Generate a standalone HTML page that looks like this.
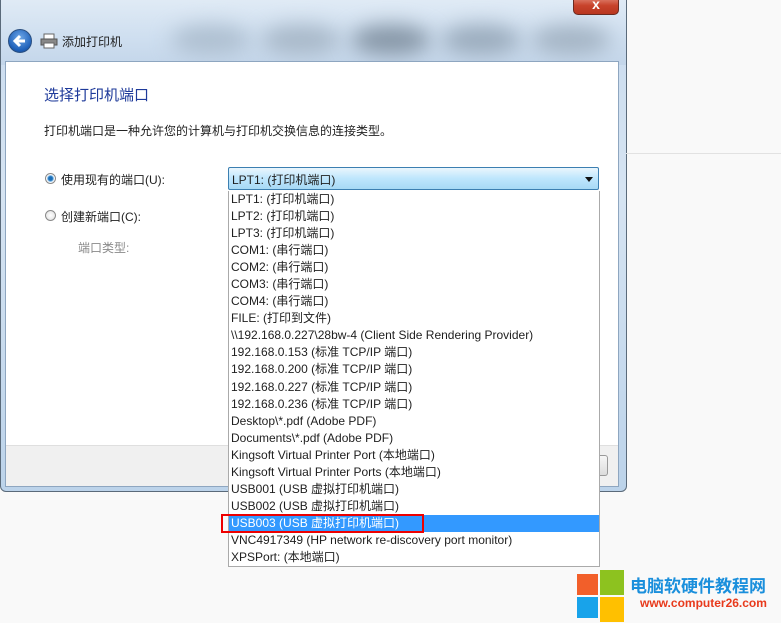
<!DOCTYPE html>
<html><head><meta charset="utf-8"><style>
*{margin:0;padding:0;box-sizing:border-box}
body{width:781px;height:623px;background:#f9f9f9;position:relative;overflow:hidden;font-family:"Liberation Sans","Noto Sans CJK SC",sans-serif;font-size:12px;color:#1e1e1e}
.win{position:absolute;left:0;top:-6px;width:627px;height:498px;border:1px solid #5a6a7a;border-radius:6px;background:linear-gradient(180deg,#c9dbee 0%,#d6e4f2 40%,#bcd3ea 100%);overflow:hidden}
.glass{position:absolute;left:0;top:0;width:627px;height:70px;background:linear-gradient(180deg,#e2ecf6,#cfdff0 60%,#c4d6ea)}
.blob{position:absolute;border-radius:50%;filter:blur(10px)}
.close{position:absolute;left:573px;top:-6px;width:46px;height:21px;border:1px solid #6b2a20;border-radius:0 0 5px 5px;background:linear-gradient(#e89a8a,#c8432c 55%,#b8361f);color:#fff;font-weight:bold;text-align:center;font-size:14px;line-height:18px}
.content{position:absolute;left:5px;top:61px;width:614px;height:426px;background:#fff;border:1px solid #8ea6c0}
.footer{position:absolute;left:0;bottom:0;width:100%;height:41px;background:#f0f0f0;border-top:1px solid #dfdfdf}
.back{position:absolute;left:8px;top:29px;width:24px;height:24px;border-radius:50%;background:radial-gradient(circle at 50% 35%,#6fa8e8,#1d5fb8 70%,#163f80);border:1px solid #2a4f80}
.t{position:absolute;white-space:nowrap}
.radio{position:absolute;width:11px;height:11px;border-radius:50%;border:1px solid #8a8a8a;background:radial-gradient(#fff,#ddd)}
.combo{position:absolute;left:228px;top:167px;width:371px;height:23px;border:1px solid #3c7fb1;border-radius:2px;background:linear-gradient(#eaf6fd,#bee6fd 50%,#a7d9f5)}
.list{position:absolute;left:228px;top:191px;width:372px;height:376px;border:1px solid #aaa;border-top:none;background:#fff}
.it{height:17.05px;line-height:17px;padding-left:2px;white-space:nowrap;font-size:12px}
.sel{background:#3399ff;color:#fff}
</style></head><body>
<div class="win"><div class="glass"></div>
<div class="blob" style="left:170px;top:30px;width:80px;height:30px;background:#aebfd0"></div>
<div class="blob" style="left:260px;top:30px;width:80px;height:30px;background:#a8b8c8"></div>
<div class="blob" style="left:350px;top:30px;width:80px;height:30px;background:#8696a6"></div>
<div class="blob" style="left:440px;top:30px;width:80px;height:30px;background:#9aabbc"></div>
<div class="blob" style="left:530px;top:30px;width:80px;height:30px;background:#a4b4c4"></div>
</div>
<div style="position:absolute;left:626px;top:153px;width:155px;height:1px;background:#e2e2e2"></div>
<div class="close">x</div>
<div class="back"><svg width="24" height="24" viewBox="0 0 24 24" style="position:absolute;left:-1px;top:-1px"><path d="M17 12H8M12 7L7 12l5 5" stroke="#fff" stroke-width="3" fill="none"/></svg></div>
<svg style="position:absolute;left:40px;top:33px" width="18" height="16" viewBox="0 0 18 16"><rect x="4" y="1" width="10" height="5" fill="#fff" stroke="#666"/><rect x="1" y="6" width="16" height="6" fill="#888" stroke="#555"/><rect x="4" y="10" width="10" height="5" fill="#fff" stroke="#666"/></svg>
<div class="t" style="left:62px;top:33px;font-size:12px">添加打印机</div>
<div class="content"><div class="footer"></div></div>
<div style="position:absolute;left:600px;top:455px;width:8px;height:21px;border:1px solid #999;border-left:none;border-radius:0 3px 3px 0;background:linear-gradient(#f6f6f6,#dcdcdc)"></div>
<div class="t" style="left:44px;top:84px;font-size:15px;color:#1e3a9a">选择打印机端口</div>
<div class="t" style="left:44px;top:122px">打印机端口是一种允许您的计算机与打印机交换信息的连接类型。</div>
<div class="radio" style="left:45px;top:173px;background:radial-gradient(#1c6fb8 30%,#7ab6e6 45%,#fff 60%,#ddd)"></div>
<div class="t" style="left:61px;top:171px">使用现有的端口(U):</div>
<div class="radio" style="left:45px;top:210px"></div>
<div class="t" style="left:61px;top:208px">创建新端口(C):</div>
<div class="t" style="left:78px;top:239px;color:#8a8a8a">端口类型:</div>
<div class="combo"><div class="t" style="left:3px;top:3px">LPT1: (打印机端口)</div>
<div style="position:absolute;right:5px;top:9px;width:0;height:0;border-left:4px solid transparent;border-right:4px solid transparent;border-top:5px solid #111"></div></div>
<div class="list">
<div class="it">LPT1: (打印机端口)</div>
<div class="it">LPT2: (打印机端口)</div>
<div class="it">LPT3: (打印机端口)</div>
<div class="it">COM1: (串行端口)</div>
<div class="it">COM2: (串行端口)</div>
<div class="it">COM3: (串行端口)</div>
<div class="it">COM4: (串行端口)</div>
<div class="it">FILE: (打印到文件)</div>
<div class="it">\\192.168.0.227\28bw-4 (Client Side Rendering Provider)</div>
<div class="it">192.168.0.153 (标准 TCP/IP 端口)</div>
<div class="it">192.168.0.200 (标准 TCP/IP 端口)</div>
<div class="it">192.168.0.227 (标准 TCP/IP 端口)</div>
<div class="it">192.168.0.236 (标准 TCP/IP 端口)</div>
<div class="it">Desktop\*.pdf (Adobe PDF)</div>
<div class="it">Documents\*.pdf (Adobe PDF)</div>
<div class="it">Kingsoft Virtual Printer Port (本地端口)</div>
<div class="it">Kingsoft Virtual Printer Ports (本地端口)</div>
<div class="it">USB001 (USB 虚拟打印机端口)</div>
<div class="it">USB002 (USB 虚拟打印机端口)</div>
<div class="it sel">USB003 (USB 虚拟打印机端口)</div>
<div class="it">VNC4917349 (HP network re-discovery port monitor)</div>
<div class="it">XPSPort: (本地端口)</div>
</div>
<div style="position:absolute;left:221px;top:514px;width:203px;height:19px;border:2px solid #e00"></div>
<div style="position:absolute;left:577px;top:574px;width:21px;height:21px;background:#f25f2a"></div>
<div style="position:absolute;left:600px;top:570px;width:24px;height:25px;background:#8dc21f"></div>
<div style="position:absolute;left:577px;top:597px;width:21px;height:21px;background:#18a3ea"></div>
<div style="position:absolute;left:600px;top:597px;width:24px;height:25px;background:#ffc000"></div>
<div class="t" style="left:630px;top:572px;font-size:17px;font-weight:bold;color:#1a8fdc;font-family:'Noto Sans CJK SC',sans-serif">电脑软硬件教程网</div>
<div class="t" style="left:640px;top:596px;font-size:12px;font-weight:bold;color:#e83a1c">www.computer26.com</div>
</body></html>
